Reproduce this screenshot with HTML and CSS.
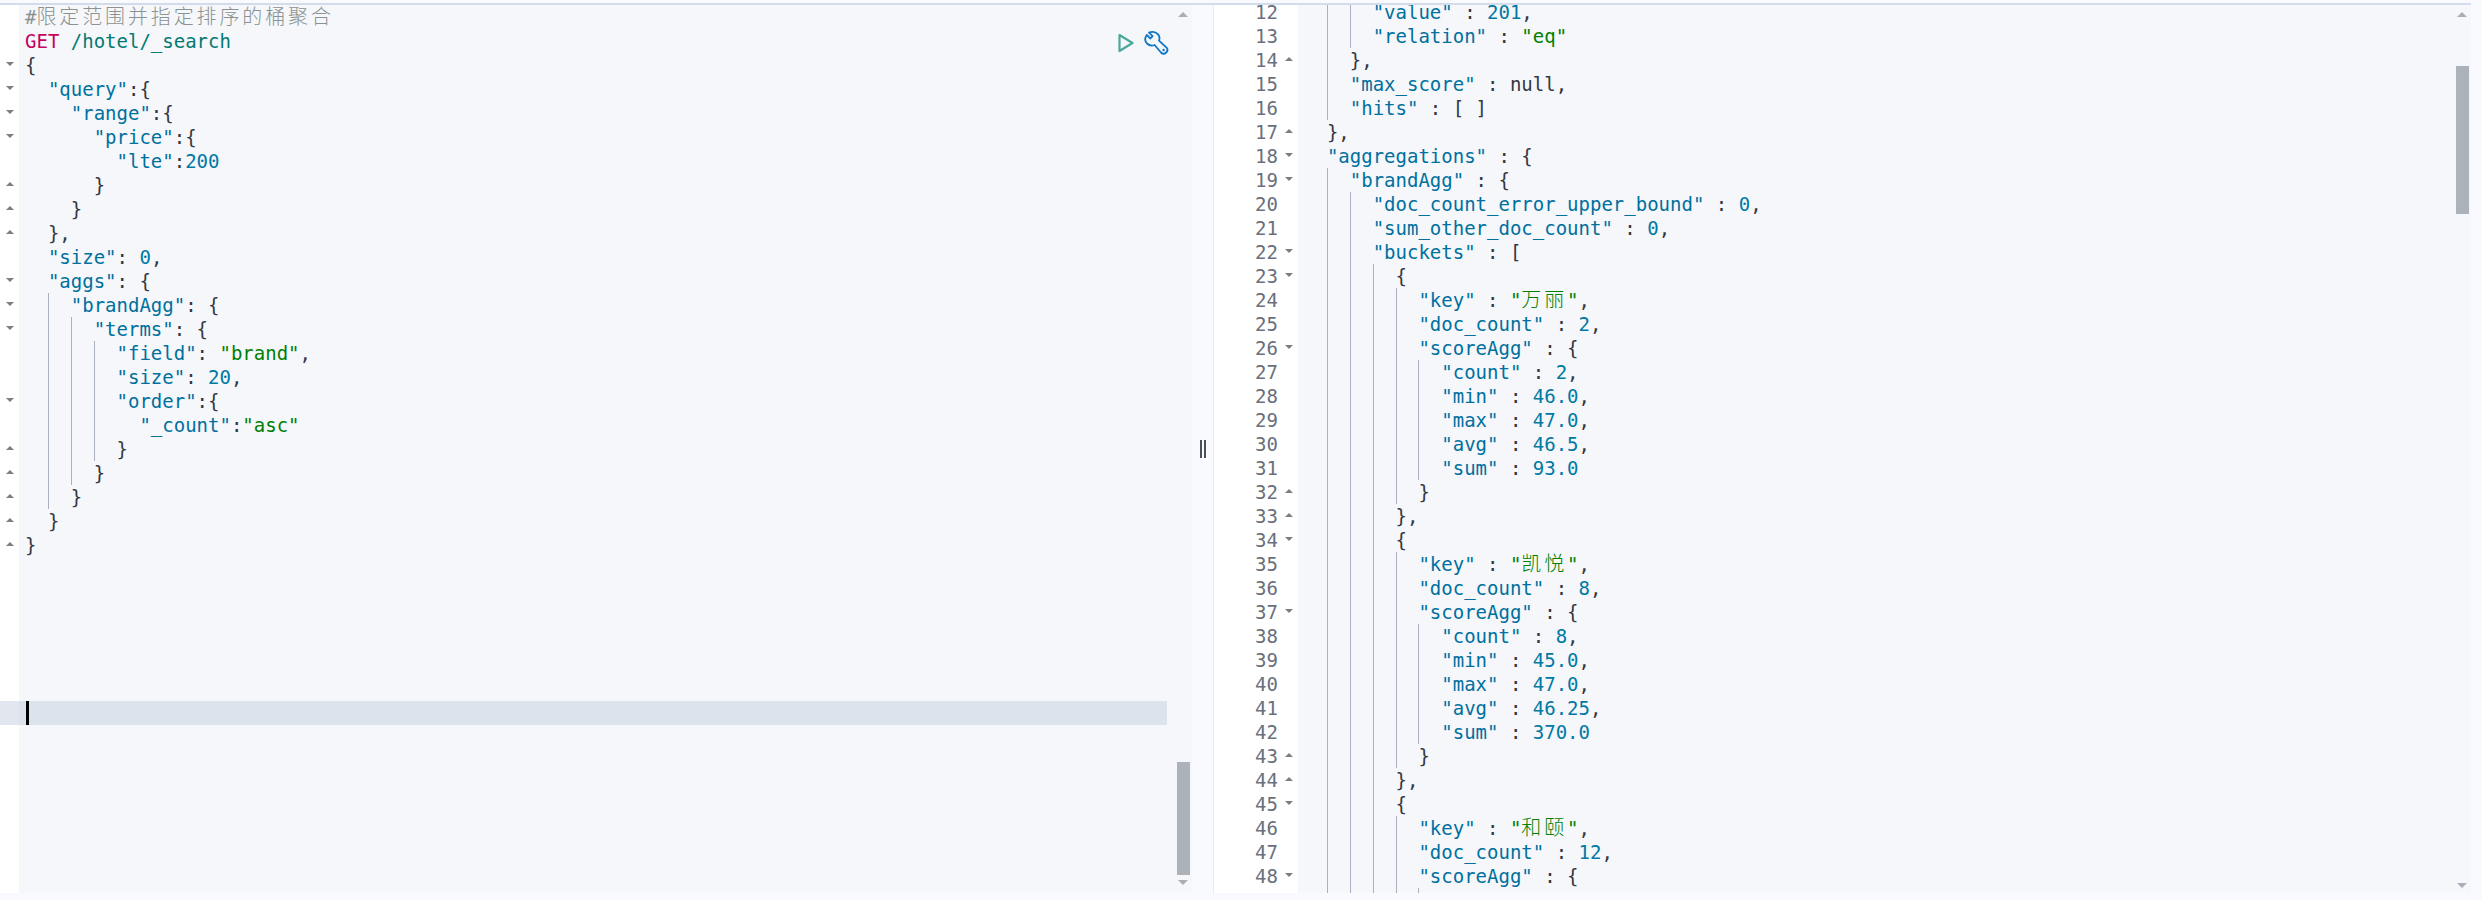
FILE: index.html
```html
<!DOCTYPE html>
<html lang="zh">
<head>
<meta charset="utf-8">
<title>Console</title>
<link rel="stylesheet" href="styles.css">
</head>
<body>
<main class="app">
  <section class="left pane">
    <div class="gutter gutter-left">
      <div class="gr"></div><div class="gr"></div>
      <div class="gr"><span class="fold down"></span></div>
      <div class="gr"><span class="fold down"></span></div>
      <div class="gr"><span class="fold down"></span></div>
      <div class="gr"><span class="fold down"></span></div>
      <div class="gr"></div>
      <div class="gr"><span class="fold up"></span></div>
      <div class="gr"><span class="fold up"></span></div>
      <div class="gr"><span class="fold up"></span></div>
      <div class="gr"></div>
      <div class="gr"><span class="fold down"></span></div>
      <div class="gr"><span class="fold down"></span></div>
      <div class="gr"><span class="fold down"></span></div>
      <div class="gr"></div><div class="gr"></div>
      <div class="gr"><span class="fold down"></span></div>
      <div class="gr"></div>
      <div class="gr"><span class="fold up"></span></div>
      <div class="gr"><span class="fold up"></span></div>
      <div class="gr"><span class="fold up"></span></div>
      <div class="gr"><span class="fold up"></span></div>
      <div class="gr"><span class="fold up"></span></div>
      <div class="gr"></div><div class="gr"></div><div class="gr"></div><div class="gr"></div><div class="gr"></div><div class="gr"></div>
      <div class="gr gr-active"></div>
    </div>
    <div class="code">
<div class="r h">#<span class="cjk">限定范围并指定排序的桶聚合</span></div>
<div class="r"><span class="m">GET</span> <span class="u">/hotel/_search</span></div>
<div class="r">{</div>
<div class="r">  <span class="k">"query"</span>:{</div>
<div class="r">    <span class="k">"range"</span>:{</div>
<div class="r">      <span class="k">"price"</span>:{</div>
<div class="r">        <span class="k">"lte"</span>:<span class="n">200</span></div>
<div class="r">      }</div>
<div class="r">    }</div>
<div class="r">  },</div>
<div class="r">  <span class="k">"size"</span>: <span class="n">0</span>,</div>
<div class="r">  <span class="k">"aggs"</span>: {</div>
<div class="r"><span class="i"></span><span class="i g"></span><span class="k">"brandAgg"</span>: {</div>
<div class="r"><span class="i"></span><span class="i g"></span><span class="i g"></span><span class="k">"terms"</span>: {</div>
<div class="r"><span class="i"></span><span class="i g"></span><span class="i g"></span><span class="i g"></span><span class="k">"field"</span>: <span class="s">"brand"</span>,</div>
<div class="r"><span class="i"></span><span class="i g"></span><span class="i g"></span><span class="i g"></span><span class="k">"size"</span>: <span class="n">20</span>,</div>
<div class="r"><span class="i"></span><span class="i g"></span><span class="i g"></span><span class="i g"></span><span class="k">"order"</span>:{</div>
<div class="r"><span class="i"></span><span class="i g"></span><span class="i g"></span><span class="i g"></span>  <span class="k">"_count"</span>:<span class="s">"asc"</span></div>
<div class="r"><span class="i"></span><span class="i g"></span><span class="i g"></span><span class="i g"></span>}</div>
<div class="r"><span class="i"></span><span class="i g"></span><span class="i g"></span>}</div>
<div class="r"><span class="i"></span><span class="i g"></span>}</div>
<div class="r">  }</div>
<div class="r">}</div>
<div class="r"></div><div class="r"></div><div class="r"></div><div class="r"></div><div class="r"></div><div class="r"></div>
<div class="r active"><span class="cursor"></span></div>
    </div>
    <div class="bar">
      <span class="arrow up"></span>
      <span class="thumb thumb-left"></span>
      <span class="arrow down"></span>
    </div>
    <div class="actions">
      <svg class="play" width="16" height="20" viewBox="0 0 16 20"><path d="M1.5 2 L14.5 10 L1.5 18 Z" fill="none" stroke="#4ca89b" stroke-width="2.2" stroke-linejoin="round"/></svg>
      <svg class="wrench" width="25" height="24" viewBox="0 0 25 24"><path d="M5 1.6 L8.6 5.2 L6.4 7.5 L2.8 4 C0.6 7 1 10.4 3 12.5 C5 14.5 8 15 10.6 14 L17 21.5 C18.5 23 20.6 23 22.2 21.5 C23.7 20 23.7 18 22.6 16.6 L15 9.6 C16 7 15.2 4 13 2.5 C11 0.9 8 0.5 5 1.6 Z" fill="none" stroke="#0f77c4" stroke-width="1.8" stroke-linejoin="round"/><circle cx="19.6" cy="19" r="1.2" fill="#0f77c4"/></svg>
    </div>
  </section>
  <div class="resizer"><span class="grip"></span><span class="grip"></span></div>
  <section class="right pane">
    <div class="gutter gutter-right">
      <div class="gr"><span class="num">12</span></div>
      <div class="gr"><span class="num">13</span></div>
      <div class="gr"><span class="num">14</span><span class="fold up"></span></div>
      <div class="gr"><span class="num">15</span></div>
      <div class="gr"><span class="num">16</span></div>
      <div class="gr"><span class="num">17</span><span class="fold up"></span></div>
      <div class="gr"><span class="num">18</span><span class="fold down"></span></div>
      <div class="gr"><span class="num">19</span><span class="fold down"></span></div>
      <div class="gr"><span class="num">20</span></div>
      <div class="gr"><span class="num">21</span></div>
      <div class="gr"><span class="num">22</span><span class="fold down"></span></div>
      <div class="gr"><span class="num">23</span><span class="fold down"></span></div>
      <div class="gr"><span class="num">24</span></div>
      <div class="gr"><span class="num">25</span></div>
      <div class="gr"><span class="num">26</span><span class="fold down"></span></div>
      <div class="gr"><span class="num">27</span></div>
      <div class="gr"><span class="num">28</span></div>
      <div class="gr"><span class="num">29</span></div>
      <div class="gr"><span class="num">30</span></div>
      <div class="gr"><span class="num">31</span></div>
      <div class="gr"><span class="num">32</span><span class="fold up"></span></div>
      <div class="gr"><span class="num">33</span><span class="fold up"></span></div>
      <div class="gr"><span class="num">34</span><span class="fold down"></span></div>
      <div class="gr"><span class="num">35</span></div>
      <div class="gr"><span class="num">36</span></div>
      <div class="gr"><span class="num">37</span><span class="fold down"></span></div>
      <div class="gr"><span class="num">38</span></div>
      <div class="gr"><span class="num">39</span></div>
      <div class="gr"><span class="num">40</span></div>
      <div class="gr"><span class="num">41</span></div>
      <div class="gr"><span class="num">42</span></div>
      <div class="gr"><span class="num">43</span><span class="fold up"></span></div>
      <div class="gr"><span class="num">44</span><span class="fold up"></span></div>
      <div class="gr"><span class="num">45</span><span class="fold down"></span></div>
      <div class="gr"><span class="num">46</span></div>
      <div class="gr"><span class="num">47</span></div>
      <div class="gr"><span class="num">48</span><span class="fold down"></span></div>
    </div>
    <div class="code">
<div class="r"><span class="i"></span><span class="i g"></span><span class="i g"></span><span class="k">"value"</span> : <span class="n">201</span>,</div>
<div class="r"><span class="i"></span><span class="i g"></span><span class="i g"></span><span class="k">"relation"</span> : <span class="s">"eq"</span></div>
<div class="r"><span class="i"></span><span class="i g"></span>},</div>
<div class="r"><span class="i"></span><span class="i g"></span><span class="k">"max_score"</span> : <span class="z">null</span>,</div>
<div class="r"><span class="i"></span><span class="i g"></span><span class="k">"hits"</span> : [ ]</div>
<div class="r">  },</div>
<div class="r">  <span class="k">"aggregations"</span> : {</div>
<div class="r"><span class="i"></span><span class="i g"></span><span class="k">"brandAgg"</span> : {</div>
<div class="r"><span class="i"></span><span class="i g"></span><span class="i g"></span><span class="k">"doc_count_error_upper_bound"</span> : <span class="n">0</span>,</div>
<div class="r"><span class="i"></span><span class="i g"></span><span class="i g"></span><span class="k">"sum_other_doc_count"</span> : <span class="n">0</span>,</div>
<div class="r"><span class="i"></span><span class="i g"></span><span class="i g"></span><span class="k">"buckets"</span> : [</div>
<div class="r"><span class="i"></span><span class="i g"></span><span class="i g"></span><span class="i g"></span>{</div>
<div class="r"><span class="i"></span><span class="i g"></span><span class="i g"></span><span class="i g"></span><span class="i g"></span><span class="k">"key"</span> : <span class="s">"<span class="cjk">万丽</span>"</span>,</div>
<div class="r"><span class="i"></span><span class="i g"></span><span class="i g"></span><span class="i g"></span><span class="i g"></span><span class="k">"doc_count"</span> : <span class="n">2</span>,</div>
<div class="r"><span class="i"></span><span class="i g"></span><span class="i g"></span><span class="i g"></span><span class="i g"></span><span class="k">"scoreAgg"</span> : {</div>
<div class="r"><span class="i"></span><span class="i g"></span><span class="i g"></span><span class="i g"></span><span class="i g"></span><span class="i g"></span><span class="k">"count"</span> : <span class="n">2</span>,</div>
<div class="r"><span class="i"></span><span class="i g"></span><span class="i g"></span><span class="i g"></span><span class="i g"></span><span class="i g"></span><span class="k">"min"</span> : <span class="n">46.0</span>,</div>
<div class="r"><span class="i"></span><span class="i g"></span><span class="i g"></span><span class="i g"></span><span class="i g"></span><span class="i g"></span><span class="k">"max"</span> : <span class="n">47.0</span>,</div>
<div class="r"><span class="i"></span><span class="i g"></span><span class="i g"></span><span class="i g"></span><span class="i g"></span><span class="i g"></span><span class="k">"avg"</span> : <span class="n">46.5</span>,</div>
<div class="r"><span class="i"></span><span class="i g"></span><span class="i g"></span><span class="i g"></span><span class="i g"></span><span class="i g"></span><span class="k">"sum"</span> : <span class="n">93.0</span></div>
<div class="r"><span class="i"></span><span class="i g"></span><span class="i g"></span><span class="i g"></span><span class="i g"></span>}</div>
<div class="r"><span class="i"></span><span class="i g"></span><span class="i g"></span><span class="i g"></span>},</div>
<div class="r"><span class="i"></span><span class="i g"></span><span class="i g"></span><span class="i g"></span>{</div>
<div class="r"><span class="i"></span><span class="i g"></span><span class="i g"></span><span class="i g"></span><span class="i g"></span><span class="k">"key"</span> : <span class="s">"<span class="cjk">凯悦</span>"</span>,</div>
<div class="r"><span class="i"></span><span class="i g"></span><span class="i g"></span><span class="i g"></span><span class="i g"></span><span class="k">"doc_count"</span> : <span class="n">8</span>,</div>
<div class="r"><span class="i"></span><span class="i g"></span><span class="i g"></span><span class="i g"></span><span class="i g"></span><span class="k">"scoreAgg"</span> : {</div>
<div class="r"><span class="i"></span><span class="i g"></span><span class="i g"></span><span class="i g"></span><span class="i g"></span><span class="i g"></span><span class="k">"count"</span> : <span class="n">8</span>,</div>
<div class="r"><span class="i"></span><span class="i g"></span><span class="i g"></span><span class="i g"></span><span class="i g"></span><span class="i g"></span><span class="k">"min"</span> : <span class="n">45.0</span>,</div>
<div class="r"><span class="i"></span><span class="i g"></span><span class="i g"></span><span class="i g"></span><span class="i g"></span><span class="i g"></span><span class="k">"max"</span> : <span class="n">47.0</span>,</div>
<div class="r"><span class="i"></span><span class="i g"></span><span class="i g"></span><span class="i g"></span><span class="i g"></span><span class="i g"></span><span class="k">"avg"</span> : <span class="n">46.25</span>,</div>
<div class="r"><span class="i"></span><span class="i g"></span><span class="i g"></span><span class="i g"></span><span class="i g"></span><span class="i g"></span><span class="k">"sum"</span> : <span class="n">370.0</span></div>
<div class="r"><span class="i"></span><span class="i g"></span><span class="i g"></span><span class="i g"></span><span class="i g"></span>}</div>
<div class="r"><span class="i"></span><span class="i g"></span><span class="i g"></span><span class="i g"></span>},</div>
<div class="r"><span class="i"></span><span class="i g"></span><span class="i g"></span><span class="i g"></span>{</div>
<div class="r"><span class="i"></span><span class="i g"></span><span class="i g"></span><span class="i g"></span><span class="i g"></span><span class="k">"key"</span> : <span class="s">"<span class="cjk">和颐</span>"</span>,</div>
<div class="r"><span class="i"></span><span class="i g"></span><span class="i g"></span><span class="i g"></span><span class="i g"></span><span class="k">"doc_count"</span> : <span class="n">12</span>,</div>
<div class="r"><span class="i"></span><span class="i g"></span><span class="i g"></span><span class="i g"></span><span class="i g"></span><span class="k">"scoreAgg"</span> : {</div>
<div class="r"><span class="i"></span><span class="i g"></span><span class="i g"></span><span class="i g"></span><span class="i g"></span><span class="i g"></span></div>
    </div>
    <div class="bar">
      <span class="arrow up"></span>
      <span class="thumb thumb-right"></span>
      <span class="arrow down"></span>
    </div>
  </section>
</main>
</body>
</html>
```
FILE: styles.css
```css
html, body {
  margin: 0;
  height: 900px;
  overflow: hidden;
  background: #f9fafd;
}

body {
  padding-top: 3px;
  box-sizing: border-box;
  font-family: "DejaVu Sans Mono", "Noto Sans CJK SC", monospace;
  font-size: 19px;
  line-height: 24px;
  color: #343741;
}

.app {
  display: flex;
  width: 2471px;
  height: 890px;
  border-top: 2px solid #d3dcea;
}

.pane {
  display: flex;
  overflow: hidden;
  height: 888px;
  background: #f5f7fb;
}

.left {
  position: relative;
  width: 1192px;
  flex: none;
}

.right {
  flex: 1;
  min-width: 0;
}

.resizer {
  flex: none;
  width: 21px;
  height: 888px;
  display: flex;
  align-items: flex-start;
  gap: 2px;
  padding-left: 8px;
  box-sizing: border-box;
}

.grip {
  width: 2px;
  height: 18px;
  margin-top: 435px;
  background: #4c505b;
}

.gutter {
  flex: none;
  background: #fff;
}

.gutter-left {
  width: 19px;
}

.gutter-right {
  width: 84px;
  margin-top: -5px;
  border-left: 1px solid #e7eaf1;
  color: #69707d;
}

.gr {
  height: 24px;
  display: flex;
  align-items: center;
}

.gr-active {
  background: #e2e6ee;
}

.num {
  width: 64px;
  text-align: right;
}

.fold {
  width: 0;
  height: 0;
  margin-top: -2px;
  border-left: 4px solid transparent;
  border-right: 4px solid transparent;
}

.fold.down {
  border-top: 4px solid #7a7d84;
}

.fold.up {
  border-bottom: 4px solid #7a7d84;
}

.gutter-left .fold {
  margin-left: 6px;
}

.gutter-right .fold {
  margin-left: 7px;
}

.code {
  flex: 1;
  min-width: 0;
}

.right .code {
  margin-top: -5px;
}

.r {
  height: 24px;
  padding-left: 6px;
  white-space: pre;
}

.active {
  background: #dbe3ed;
}

.cursor {
  display: inline-block;
  width: 3px;
  height: 24px;
  margin-left: 1px;
  background: #000;
  vertical-align: top;
}

.i {
  display: inline-block;
  width: 2ch;
  height: 24px;
  vertical-align: top;
}

.g {
  box-shadow: inset 1px 0 0 #a9b0c1;
}

.h { color: #8a9391; }
.m { color: #c4045f; }
.u { color: #017a72; }
.k { color: #00709e; }
.n { color: #0079a5; }
.s { color: #017f01; }
.z { color: #343741; }

.cjk {
  font-size: 20px;
  font-weight: 300;
  letter-spacing: 2.87px;
}

.bar {
  flex: none;
  width: 25px;
  display: flex;
  flex-direction: column;
  align-items: flex-end;
  padding: 7px 2px 0 0;
  box-sizing: border-box;
}

.arrow {
  width: 0;
  height: 0;
  margin-right: 2px;
  border-left: 5px solid transparent;
  border-right: 5px solid transparent;
}

.arrow.up {
  border-bottom: 5px solid #a9aeb8;
}

.arrow.down {
  margin-top: 5px;
  border-top: 5px solid #a9aeb8;
}

.thumb {
  width: 13px;
  background: #adb2ba;
}

.thumb-left {
  height: 113px;
  margin-top: 745px;
}

.thumb-right {
  height: 148px;
  margin-top: 49px;
  margin-bottom: 664px;
}

.actions {
  position: absolute;
  top: 26px;
  right: 23px;
  display: flex;
  align-items: center;
  gap: 10px;
}
```
